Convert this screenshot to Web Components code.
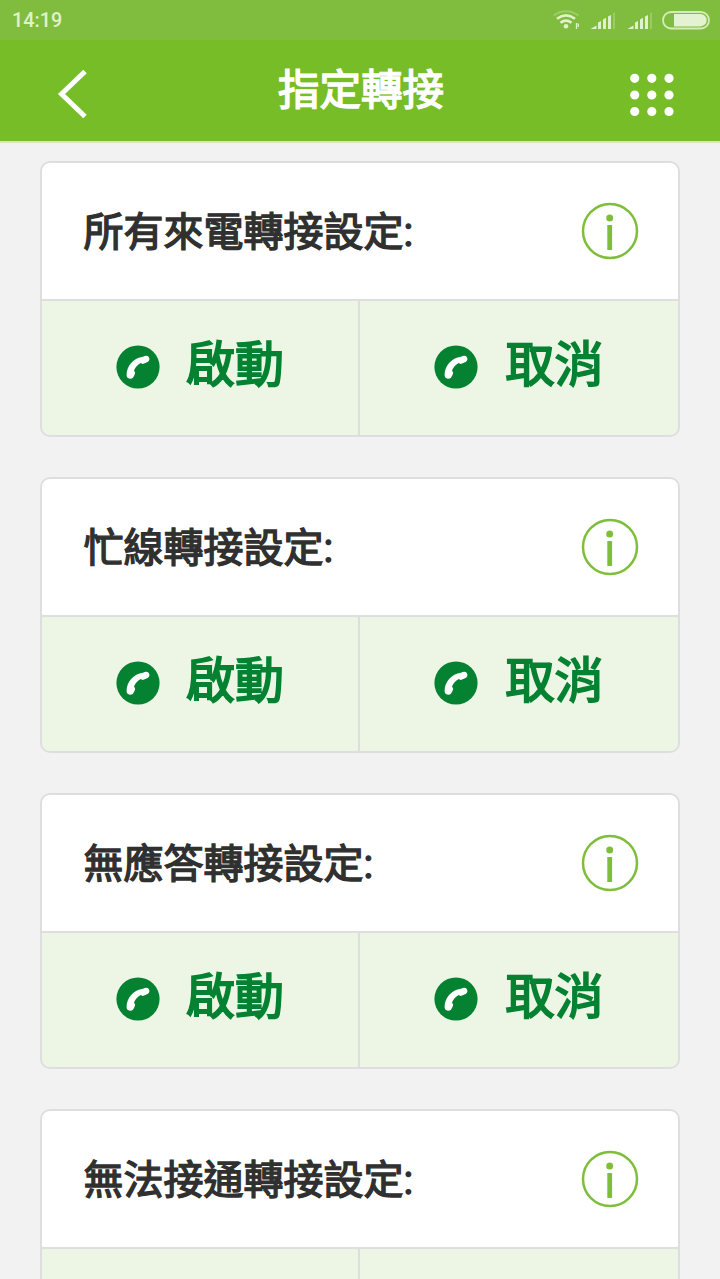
<!DOCTYPE html>
<html lang="zh-Hant">
<head>
<meta charset="utf-8">
<title>指定轉接</title>
<style>
html,body{margin:0;height:100%;overflow:hidden;background:#f2f2f2}
body{font-family:Roboto,"Noto Sans CJK TC",sans-serif}
</style>
</head>
<body>
<forward-app></forward-app>
<script>
const define=(name,html)=>customElements.define(name,class extends HTMLElement{
  constructor(){super();this.attachShadow({mode:'open'}).innerHTML=html;}
});

define('status-bar',`<style>
:host{display:flex;box-sizing:border-box;height:40px;background:#80bd3f;color:#e0f2cb;padding-left:12px;justify-content:space-between;align-items:center;font:500 19.8px/40px Roboto,sans-serif}
span{padding-top:2px}
svg{display:block}
</style><span><slot></slot></span>
<svg width="180" height="40" viewBox="0 0 180 40">
<g fill="none" stroke="#e0f2cb" stroke-width="2.6">
<path d="M13.500 15.500Q26 7 38.500 15.500" opacity=".3" stroke-width="2"/>
<path d="M17 18.800Q26 12 35 18.800"/><path d="M20.500 22.800Q26 18.500 31.500 22.800"/></g>
<circle cx="26" cy="26.300" r="2.300" fill="#e0f2cb"/>
<path d="M36.500 23v6M38.300 23.500v3.500" stroke="#e0f2cb" stroke-width="1.300"/>
<g fill="#e0f2cb"><g id="s"><path d="M50.500 29l6-3.500v3.500zM58 22.500l3-1.500v8h-3zM63 19.500l3-1.800V29h-3zM68 16.500l3-1.500v14h-3z"/><path d="M73 13.500l2-1.500v17h-2z" opacity=".28"/></g>
<use href="#s" x="37"/></g>
<rect x="123" y="12" width="46" height="16.500" rx="8.200" fill="none" stroke="#d5ebba" stroke-width="1.800"/>
<path d="M134 14h26.500a6.200 6.200 0 0 1 0 12.400H134z" fill="#e3f3d1"/>
</svg>`);

define('title-bar',`<style>
:host{display:grid;grid-template-columns:120px 1fr 120px;height:101px;background:#76bd27;border-bottom:2px solid #d5e5c1;color:#fff}
h1{margin:0;padding-left:2px;text-align:center;font:400 41.500px/94px "Noto Sans CJK TC",sans-serif;-webkit-text-stroke:1.500px currentColor}
svg{display:block}
</style>
<svg width="120" height="101" fill="none" stroke="#fff" stroke-width="5"><path d="M85 31.500L61.500 54 85 76.500"/></svg>
<h1><slot></slot></h1>
<svg width="120" height="101" viewBox="600 40 120 101" fill="none" stroke="#fff" stroke-width="9.200" stroke-linecap="round"><path d="M634.700 78.300h.01M651.800 78.300h.01M669 78.300h.01M634.700 95h.01M651.800 95h.01M669 95h.01M634.700 111.500h.01M651.800 111.500h.01M669 111.500h.01"/></svg>`);

define('info-icon',`<style>:host{display:block;width:58px;height:58px}svg{display:block}</style>
<svg width="58" height="58" viewBox="0 0 58 58"><circle cx="29" cy="29" r="27" fill="none" stroke="#7fbe3b" stroke-width="2.500"/><circle cx="28.700" cy="16" r="3.500" fill="#7fbe3b"/><path d="M28.700 23v25" stroke="#7fbe3b" stroke-width="4.800"/></svg>`);

define('call-button',`<style>
:host{display:flex;box-sizing:border-box;padding-left:74px;height:136px;background:#edf6e5;color:#048232}
svg{display:block;flex:none;margin:44px var(--icon-gap,26px) 0 0}
span{display:var(--label-display,block);font:400 49px/120px "Noto Sans CJK TC",sans-serif;white-space:nowrap;-webkit-text-stroke:1.800px currentColor}
</style>
<svg width="44" height="44" viewBox="0 0 44 44"><circle cx="22" cy="22" r="21.600" fill="#048232"/><path d="M10.600 30.500C10.300 21.500 17.500 12.800 27 11.800C28.800 10.600 31.300 10.200 32.600 11.700C34 13.600 33.500 15.800 32 16.700C30.300 17.600 28.500 18.300 26.700 18.900L24.700 17.900C21.500 19.500 19.200 22.300 18 25.500L19.200 27.700C18.700 29.500 18 31.500 16.700 33C14.500 34.600 11 33.700 10.600 30.500Z" fill="#fff"/></svg>
<span><slot></slot></span>`);

define('forward-card',`<style>
:host{display:block;box-sizing:border-box;height:275.900px;border:2px solid #dedede;border-radius:10px;background:#fff;overflow:hidden;color:#303030}
:host([partial]){--label-display:none}
header{display:flex;box-sizing:border-box;height:135.900px;padding:0 39px 0 41.500px;justify-content:space-between;align-items:center}
h2{margin:0;padding-top:4px;height:134px;font:400 40px/134px Roboto,"Noto Sans CJK TC",sans-serif;white-space:nowrap;-webkit-text-stroke:1.400px currentColor}
.actions{display:grid;grid-template-columns:316px 1fr;gap:2px;border-top:2px solid #dedede;background:#dedede}
.actions call-button+call-button{--icon-gap:27.500px}
</style>
<header><h2><slot></slot></h2><info-icon></info-icon></header>
<div class="actions"><call-button>啟動</call-button><call-button>取消</call-button></div>`);

define('forward-app',`<style>
:host{display:block;height:1279px;overflow:hidden;background:#f2f2f2}
main{display:flex;flex-direction:column;gap:40px;padding:18.300px 40px 0}
</style>
<status-bar>14:19</status-bar>
<title-bar>指定轉接</title-bar>
<main>
<forward-card>所有來電轉接設定:</forward-card>
<forward-card>忙線轉接設定:</forward-card>
<forward-card>無應答轉接設定:</forward-card>
<forward-card partial>無法接通轉接設定:</forward-card>
</main>`);
</script>
</body>
</html>
